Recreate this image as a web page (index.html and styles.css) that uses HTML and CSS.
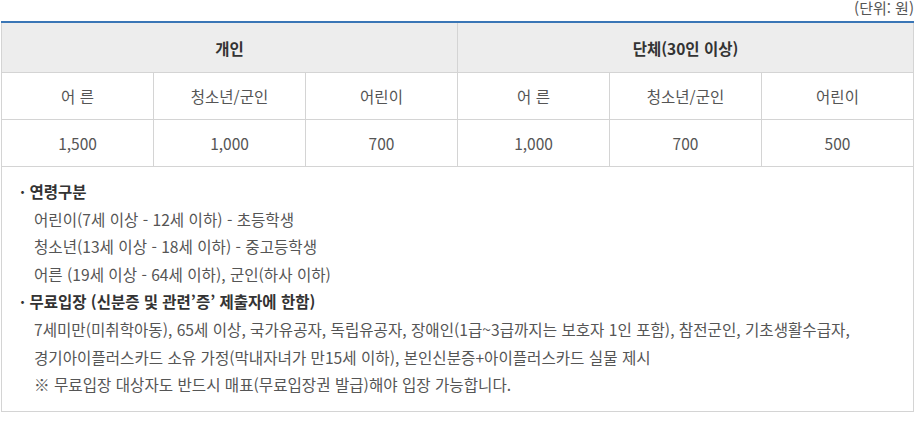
FILE: index.html
```html
<!DOCTYPE html>
<html lang="ko">
<head>
<meta charset="utf-8">
<link rel="stylesheet" href="styles.css">
</head>
<body>
<div class="wrap">
  <div class="unit">(단위: 원)</div>
  <table class="price">
    <thead>
      <tr class="group">
        <th colspan="3">개인</th>
        <th colspan="3">단체(30인 이상)</th>
      </tr>
    </thead>
    <tbody>
      <tr class="cat">
        <td>어 른</td><td>청소년/군인</td><td>어린이</td>
        <td>어 른</td><td>청소년/군인</td><td>어린이</td>
      </tr>
      <tr class="val">
        <td>1,500</td><td>1,000</td><td>700</td>
        <td>1,000</td><td>700</td><td>500</td>
      </tr>
    </tbody>
  </table>
  <div class="notes">
    <p class="head">· 연령구분</p>
    <p class="item">어린이(7세 이상 - 12세 이하) - 초등학생</p>
    <p class="item">청소년(13세 이상 - 18세 이하) - 중고등학생</p>
    <p class="item">어른 (19세 이상 - 64세 이하), 군인(하사 이하)</p>
    <p class="head">· 무료입장 (신분증 및 관련’증’ 제출자에 한함)</p>
    <p class="item">7세미만(미취학아동), 65세 이상, 국가유공자, 독립유공자, 장애인(1급~3급까지는 보호자 1인 포함), 참전군인, 기초생활수급자,</p>
    <p class="item">경기아이플러스카드 소유 가정(막내자녀가 만15세 이하), 본인신분증+아이플러스카드 실물 제시</p>
    <p class="item">※ 무료입장 대상자도 반드시 매표(무료입장권 발급)해야 입장 가능합니다.</p>
  </div>
</div>
</body>
</html>
```
FILE: styles.css
```css
html, body {
  margin: 0;
  padding: 0;
  background: #fff;
}
body {
  font-family: "Noto Sans CJK KR", "Noto Sans", sans-serif;
  font-size: 15px;
  color: #555;
}
.wrap {
  width: 913px;
  margin-left: 1px;
}
.unit {
  height: 21px;
  line-height: 16px;
  font-size: 15px;
  text-align: right;
  color: #555;
}
.price {
  width: 913px;
  border-collapse: collapse;
  table-layout: fixed;
  border-top: 2px solid #3a76b6;
}
.price th, .price td {
  border: 1px solid #d4d4d4;
  text-align: center;
  padding: 0;
}
.group th {
  background: #ededed;
  height: 49px;
  font-weight: bold;
  color: #333;
  font-size: 15.5px;
}
.cat td, .val td {
  height: 46px;
  font-size: 15.5px;
  color: #555;
}
.notes {
  border: 1px solid #d4d4d4;
  border-top: 0;
  padding: 11px 0 11px 0;
  height: 222px;
}
.notes p {
  margin: 0;
  line-height: 27.6px;
  white-space: nowrap;
}
.notes .head {
  padding-left: 18px;
  font-weight: bold;
  color: #333;
  font-size: 15.5px;
}
.notes .item {
  padding-left: 32px;
  font-size: 15.6px;
}
```
